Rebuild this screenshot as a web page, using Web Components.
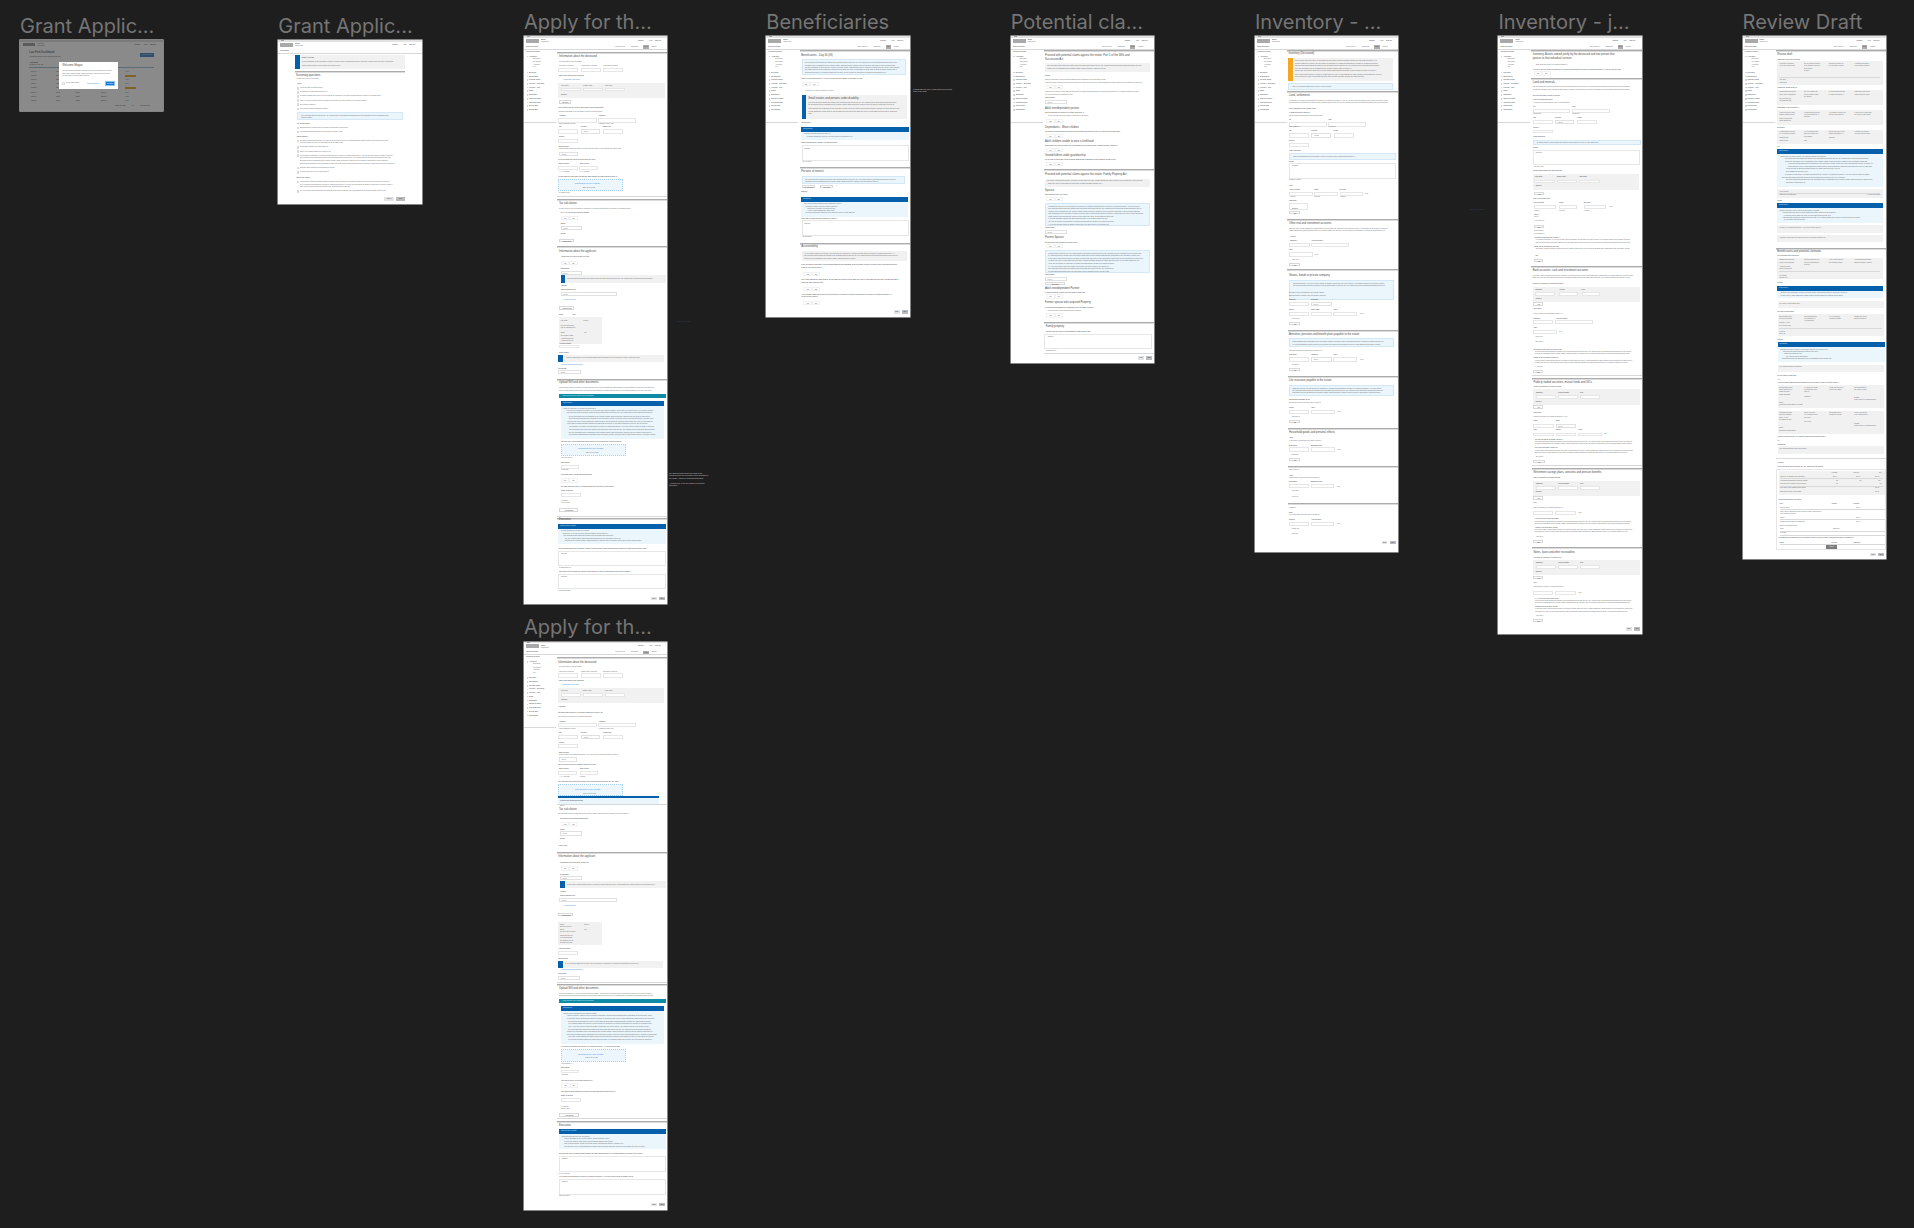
<!DOCTYPE html>
<html lang="en"><head><meta charset="utf-8"><title>Grant application flows</title>
<style>html,body{margin:0;height:100%;background:#1e1e1e;overflow:hidden}</style></head>
<body><fg-canvas></fg-canvas>
<script>
const STOCK="The applicant must confirm the details of the deceased and provide the will, any codicils and all supporting documents before the application can be submitted to the probate registry. Each beneficiary named in the will must be listed with a current mailing address and relationship to the deceased. Please review the notice requirements carefully because a person who may have a claim against the estate must be served within the required period. Enter the value of each asset as at the date of death and state whether the asset was held jointly or is located outside the province. Do not include life insurance or pension benefits that are payable to a named beneficiary. If you are not sure about an answer, speak with your lawyer before you continue with the next section of this form. ";
let ptr=0;
function fill(w,fs){const n=Math.max(3,Math.round(w/(fs*.47)));if(ptr+n>=STOCK.length)ptr=0;let s=STOCK.slice(ptr,ptr+n).trim();ptr+=n;return s;}
function ctx(fx,fy,sx=3,sy=3){
 const X=z=>(z-fx)/sx,Y=z=>(z-fy)/sy;
 const box=(c,y0,y1,x0,x1,kids,text)=>({c,x:X(x0),w:(x1-x0)/sx,y:Y(y0),h:(y1-y0)/sy,kids:kids&&kids.flat(9),text});
 const tx=(c,fs,zy,x0,x1,text)=>{const w=(x1-x0)/sx,h=fs*1.25;return{c,x:X(x0),w,y:Y(zy)-h/2,h,text:text===undefined?fill(w,fs):text};};
 const api={
  h:(zy,x0,x1,s)=>tx('h',2.7,zy,x0,x1,s),
  t:(zy,x0,x1,s)=>tx('t',1.6,zy,x0,x1,s),
  l:(zy,x0,x1,s)=>tx('l',1.6,zy,x0,x1,s),
  a:(zy,x0,x1,s)=>tx('a',1.6,zy,x0,x1,s),
  ts:(zys,x0,x1)=>zys.map(z=>tx('t',1.6,z,x0,x1)),
  ls:(zys,x0,x1)=>zys.map(z=>tx('l',1.6,z,x0,x1)),
  tc:(zy,...cols)=>cols.map(c=>tx('t',1.6,zy,c[0],c[1],c[2])),
  lc:(zy,...cols)=>cols.map(c=>tx('l',1.6,zy,c[0],c[1],c[2])),
  i:(y0,y1,...cols)=>cols.map(c=>box('inp',y0,y1,c[0],c[1])),
  s:(y0,y1,x0,x1,v='Select')=>box('sel',y0,y1,x0,x1,null,v),
  b:(y0,y1,x0,x1,v='Add another')=>box('btn',y0,y1,x0,x1,null,v),
  yn:(zy,x0)=>{const w=8.5*sx,h=2.2*sy;return[box('seg',zy-h,zy+h,x0,x0+w,null,'Yes'),box('seg',zy-h,zy+h,x0+w,x0+2*w,null,'No')];},
  ln:(zy,x0,x1,k='thick')=>box(k,zy-1.5,zy+4.5,x0,x1),
  box:(c,y0,y1,x0,x1,kids)=>box(c,y0,y1,x0,x1,kids),
  strip:(c,y0,y1,x0,x1)=>box(c,y0,y1,x0,x1),
  bar:(y0,y1,x0,x1,v,c='bar')=>box(c,y0,y1,x0,x1,null,v),
  rect:(c,y0,y1,x0,x1,v)=>box(c,y0,y1,x0,x1,null,v)
 };
 return api;
}
const CSS=`
.r{display:flex;flex:none}
.r>div{flex:none;box-sizing:border-box;white-space:nowrap;line-height:1.25}
.h{font-size:2.7px;color:#4c4c4c;font-weight:400}
.t{font-size:1.6px;color:#6a6a6a}
.l{font-size:1.6px;color:#383838}
.a{font-size:1.6px;color:#2b88d6}
.inp{background:#fff;border:1px solid #e6e6e6}
.sel{background:#fff;border:1px solid #e0e0e0;font-size:1.6px;color:#777;padding-left:1.5px;line-height:3.6px!important;overflow:hidden}
.btn{background:#fff;border:1px solid #d8d8d8;font-size:1.6px;color:#444;text-align:center;line-height:3.4px!important}
.seg{border:1px solid #f1f1f1;font-size:1.6px;color:#444;text-align:center;line-height:3.4px!important;background:#fff}
.thick{background:linear-gradient(#acacac 50%,#dcdcdc 50%)}
.thin{background:#d8d8d8}
.g{background:#f1f1f1}
.b{background:#ebf5fc}
.bb{background:#ebf5fc;border:1px solid #d4e7f7}
.dz{background:#eef6fd;border:1px dotted #a9d2f0}
.bar{background:#0560ac;color:#dbe9f5;font-size:1.6px;padding-left:2px;line-height:4.4px!important}
.teal{background:#0f8ba6;color:#dff1f5;font-size:1.6px;padding-left:3px;line-height:4.4px!important}
.strip{background:#0560ac}
.amb{background:#f5a623}
.sq{background:#d4d4d4}
.logo{background:#a9a9a9}
.top{background:#e2e2e2}
.mark{background:#a4a4a4}
.tab{background:#adadad;font-size:1.5px;color:#444;text-align:center;line-height:3px!important}
.nb{background:#e4e4e4;color:#444;font-size:1.5px;text-align:center;line-height:3.2px!important}
.nx{background:#bcbcbc;color:#333;font-size:1.5px;text-align:center;line-height:3.2px!important}
.dark{background:#7b7b7b;color:#e8e8e8;font-size:1.5px;text-align:center;line-height:3.2px!important}
.modal{background:#fff}
.pri{background:#1a7bd4;color:#fff;font-size:1.5px;text-align:center;line-height:4.4px!important;border:1px solid #8cc3ea}
.chip{background:#e8b64f}
.dbtn{background:#5a90d0;color:#dfe8f2;font-size:1.4px;text-align:center;line-height:3.6px!important}
.dl{background:#a9c8df}
.cb{background:#fff;border:1px solid #dcdcdc}
`;
function render(parent,items,ox,oy){
 items=items.flat(9).sort((p,q)=>p.y-q.y);
 let cy=oy,i=0;
 while(i<items.length){
  const g=[];const y=items[i].y;
  while(i<items.length&&Math.abs(items[i].y-y)<.02)g.push(items[i++]);
  g.sort((p,q)=>p.x-q.x);
  const h=Math.max(...g.map(o=>o.h));
  const row=document.createElement('div');row.className='r';
  row.style.cssText=`margin-top:${(y-cy).toFixed(2)}px;height:${h.toFixed(2)}px`;
  let cx=ox;
  for(const o of g){
   const d=document.createElement('div');d.className=o.c;
   d.style.cssText=`margin-left:${(o.x-cx).toFixed(2)}px;width:${o.w.toFixed(2)}px;height:${o.h.toFixed(2)}px`;
   if(o.text)d.textContent=o.text;
   if(o.kids)render(d,o.kids,o.x,o.y);
   row.appendChild(d);cx=o.x+o.w;
  }
  parent.appendChild(row);cy=y+h;
 }
}
const HEAD=(title,tabs=true)=>{const c=ctx(0,0,1,1);return[
 c.rect('top',0,1.7,0,143.5),
 c.rect('mark',.2,1.4,3,6),
 c.rect('logo',3,7,2,15),
 c.l(4.2,17,23,'Estate'),
 c.lc(4.8,[114,123,'Contact'],[125,128,'Help'],[131,138,'Sign out']),
 c.t(6.1,17,24,'Grant filing'),
 c.l(11,2,22,title),
 tabs?[c.tc(11,[91.3,104.3,'Save and exit'],[107,117,'Download'],[127.5,137,'Submit']),c.rect('tab',9.4,12.6,119.3,124.7,'Draft')]:[],
 c.rect('thin',13,14,0,143.5)
];};
const NAV=(()=>{const c=ctx(0,0,1,1);
 const it=(y,x,s,w)=>[c.rect('sq',y-.8,y+.8,x-2.5,x-.9),c.l(y,x,x+w,s)];
 return()=>[
 c.l(16,1.5,18,'Application sections'),
 it(20.7,5,'Application',12),
 c.t(23,9,16,'Deceased'),c.t(26.3,9,17,'Tax details'),c.t(29,9,18,'Applicant'),c.t(31.3,9,16,'Will'),
 it(36.7,5,'Executors',10),it(40.7,5,'Beneficiaries',13),it(44.3,5,'Potential claims',16),it(48,5,'Inventory - Deceased',24),
 it(51.7,5,'Inventory - joint',10),it(55.3,5,'Debts',10),it(59.3,5,'Distribution',13),it(63,5,'Notices to others',16),it(66.7,5,'Supporting docs',13),it(70.3,5,'Review draft',10),it(74.3,5,'Declarations',12),
 c.rect('thin',86,87,0,32)];})();

const A3=()=>{const a=ctx(42,108),b=ctx(42,-852);return[
 a.ln(157,142,472),
 a.h(170,147,282,'Information about the deceased'),
 a.t(186,147,236,'Full legal name of the deceased'),
 a.tc(198,[147,190,'First name (required)'],[214,262,'Middle name (optional)'],[280,320,'Last name (required)']),
 a.i(205,217,[145,205],[212,272],[280,340]),
 a.l(228,147,243,'Other legal names of the deceased'),
 a.a(240,155,228,'+ Add another legal name'),
 a.box('g',248,295,145,465,[a.tc(258,[153,195,'First name'],[220,270,'Middle name'],[285,325,'Last name']),a.i(263,274,[152,212],[220,280],[285,345]),a.l(285,153,180,'Remove')]),
 a.b(300,312,148,182,'Add name'),
 a.l(323,145,295),a.t(335,145,285),
 a.lc(348,[147,170,'Address 1'],[265,288,'Address 2']),
 a.i(355,368,[145,260],[265,378]),
 a.tc(372,[147,200,'Street address, PO box'],[265,320,'Apartment, suite, unit']),
 a.lc(382,[147,158,'City'],[212,235,'Province'],[278,305,'Postal code']),
 a.i(388,401,[145,205],[278,338]),a.s(388,401,212,270,'Alberta'),
 a.l(410,147,165,'Country'),a.i(418,428,[145,205]),
 a.l(440,147,188,'Date of death'),a.t(448,147,338),a.s(455,467,148,205,'Select'),
 a.l(480,145,268),
 a.lc(492,[147,192,'Date of death'],[210,258,'Date of birth']),
 a.i(498,511,[145,205],[208,265]),
 a.tc(515,[147,185,'YYYY-MM-DD'],[208,245,'YYYY-MM-DD']),
 a.l(531,145,340),
 a.box('dz',537,575,145,340,[a.a(550,192,295,'Drag and drop a file here or browse'),a.t(562,215,270,'PDF up to 10 MB')]),
 a.t(580,147,182),
 a.rect('thin',589,592,142,472),a.ln(598,142,472),
 a.h(611,147,207,'Tax calculation'),
 a.t(627,147,378),
 a.l(640,152,245),a.yn(655,152),
 a.l(672,152,178,'Status'),a.s(679,692,152,217,'Select'),
 a.l(702,152,175,'Details'),a.b(717,727,148,192,'Add tax item'),
 a.ln(740,142,472),
 a.h(756,147,282,'Information about the applicant'),
 a.l(772,152,242),a.yn(790,152),
 a.l(807,152,175,'Relationship'),a.s(813,825,152,217,'Select'),
 a.box('g',827,850,152,468,[a.strip('strip',827,850,152,164),a.t(838,172,445)]),
 a.l(860,152,172,'Address'),a.l(872,152,220,'Search address book'),
 a.s(878,890,152,320,'Select'),a.a(902,157,216,'+ Add new contact'),
 a.b(920,930,148,192,'Add applicant'),
 a.lc(945,[147,167,'Name'],[188,205,'Title']),
 a.box('g',952,1032,147,277,[a.tc(965,[152,178,'Full name'],[220,250,'Lawyer']),a.ts([978,985],152,200),a.tc(999,[152,176,'Email'],[222,238,'Fax']),a.ts([1010,1017,1024],152,192)]),
 b.l(72,147,195,'Applicant number'),b.i(75,85,[147,207]),
 b.l(100,147,187,'Notice details'),
 b.box('g',105,128,145,462,[b.strip('strip',105,128,145,159),b.t(115,168,408)]),
 b.a(135,150,235,'+ Add new supporting document'),
 b.l(147,145,185,'Documents'),b.s(152,164,145,212,'Select'),
 b.ln(179,142,472),
 b.h(190,147,290,'Upload Will and other documents'),
 b.ts([205,213],147,450),
 b.bar(222,236,147,467,'Attach a scan of the original Will and codicils','teal'),
 b.bar(244,258,153,463,'Scan and file'),
 b.box('b',258,357,153,463,[b.ts([267],160,268),b.ts([274,281],170,445),b.ts([291,298],176,445),b.ts([306,314],172,440),b.ts([322,330],178,452),b.ts([339,346],176,450)]),
 b.l(367,153,345),
 b.box('dz',372,410,153,347,[b.a(386,202,300,'Drag and drop a file here or browse'),b.t(398,225,278,'PDF up to 10 MB')]),
 b.t(416,155,190),b.l(430,153,180,'Date signed'),b.i(435,447,[152,208]),b.t(452,153,175),
 b.l(467,153,252),b.yn(483,152),
 b.l(501,153,328),b.l(514,153,190,'Name of witness'),b.i(520,532,[152,212]),b.ts([545,551],153,180),
 b.b(567,577,148,205,'Add witness'),
 b.rect('thin',589,592,142,472),b.ln(597,142,472),
 b.h(602,147,190,'Executors'),
 b.bar(614,628,145,467,'Duties of the executor'),
 b.box('b',628,675,145,467,[b.ts([635],153,240),b.ts([643],158,305),b.ts([650],160,320),b.ts([658],165,345),b.ts([665],165,415)]),
 b.l(688,147,420),b.box('inp',694,740,145,467,[b.t(702,150,172,'Optional')]),b.t(745,147,183),
 b.l(757,147,380),b.box('inp',763,810,145,467,[b.t(770,150,172,'Optional')]),b.t(815,147,183),
 b.rect('nb',833,843,423,441,'Back'),b.rect('nx',833,843,447,465,'Next')
];};

const A4=()=>{const a=ctx(12,94.5),b=ctx(12,-835.5);return[
 a.ln(142,110,442),
 a.h(157,115,252,'Information about the deceased'),
 a.t(172,117,205,'Full legal name of the deceased'),
 a.tc(185,[117,160,'First name (required)'],[183,232,'Middle name (optional)'],[248,290,'Last name (required)']),
 a.i(190,205,[115,175],[183,243],[248,308]),
 a.l(213,117,212,'Other legal names of the deceased'),
 a.a(225,122,197,'+ Add another legal name'),
 a.box('g',234,280,115,432,[a.tc(243,[122,165,'First name'],[188,238,'Middle name'],[255,295,'Last name']),a.i(249,261,[122,183],[190,250],[255,315]),a.l(271,124,147,'Remove')]),
 a.l(292,115,152,'Add name'),
 a.l(309,115,263),a.t(322,115,228),
 a.lc(335,[117,140,'Address 1'],[235,258,'Address 2']),
 a.i(340,352,[115,230],[235,348]),
 a.tc(358,[118,170,'Street address, PO box'],[235,288,'Apartment, suite, unit']),
 a.lc(370,[117,128,'City'],[182,205,'Province'],[250,277,'Postal code']),
 a.i(375,388,[115,175],[250,308]),a.s(375,388,182,240,'Alberta'),
 a.l(398,117,135,'Country'),a.i(403,415,[115,175]),
 a.l(428,117,158,'Date of death'),a.t(436,117,305),a.s(442,455,117,172,'Select'),
 a.l(466,115,237),
 a.lc(478,[117,163,'Date of death'],[180,228,'Date of birth']),
 a.i(484,497,[115,172],[180,235]),
 a.tc(501,[118,152,'YYYY-MM-DD'],[180,205,'Format']),
 a.l(518,115,308),
 a.box('dz',523,558,115,310,[a.a(537,163,262,'Drag and drop a file here or browse'),a.t(550,187,238,'PDF up to 10 MB')]),
 a.bar(558,566,115,418,''),
 a.box('b',566,587,115,418,[a.l(573,120,195)]),
 a.rect('thin',583,587,110,442),
 a.t(590,120,133),
 a.h(600,117,177,'Tax calculation'),
 a.t(613,115,348),
 a.l(628,120,213),a.yn(643,122),
 a.l(660,120,146,'Status'),a.s(665,678,120,187,'Select'),
 a.l(688,120,145,'Details'),a.l(708,115,160,'Add tax item'),
 a.ln(727,110,442),
 a.h(742,115,250,'Information about the applicant'),
 a.l(760,120,212),a.yn(776,122),
 a.l(795,120,145,'Relationship'),a.s(800,812,120,187,'Select'),
 a.box('g',815,835,120,437,[a.strip('strip',815,835,120,134),a.t(825,140,415)]),
 a.l(847,120,140,'Address'),a.l(858,120,188,'Search address book'),
 a.s(865,877,118,292,'Select'),a.a(889,127,186,'+ Add new contact'),
 a.b(909,919,115,160,'Add applicant'),
 b.box('g',8,77,115,245,[b.tc(17,[120,138,'Name'],[192,225,'Lawyer']),b.ts([22],120,157),b.tc(32,[120,137,'Email'],[192,208,'Fax']),b.ts([38],120,172),b.ts([50,56,63,70],120,160)]),
 b.l(88,115,163,'Applicant number'),b.i(93,106,[115,175]),
 b.l(118,115,158,'Notice details'),
 b.box('g',123,144,115,430,[b.strip('strip',123,144,115,129),b.t(133,135,378)]),
 b.a(152,120,203,'+ Add new supporting document'),
 b.l(163,115,153,'Documents'),b.s(168,180,115,180,'Select'),
 b.rect('thin',186,189,110,442),b.ln(194,110,442),
 b.h(207,117,260,'Upload Will and other documents'),
 b.ts([222,230],117,420),
 b.bar(238,252,117,437,'Attach a scan of the original Will and codicils','teal'),
 b.bar(260,275,123,433,'Scan and file'),
 b.box('b',275,373,123,433,[b.ts([284],130,238),b.ts([291,299],140,415),b.ts([307,315],145,415),b.ts([323,331],145,408),b.ts([339,347],140,422),b.ts([354,363],145,420)]),
 b.l(383,123,315),
 b.box('dz',388,428,123,317,[b.a(403,172,270,'Drag and drop a file here or browse'),b.t(414,193,246,'PDF up to 10 MB')]),
 b.t(433,124,158),b.l(446,123,150,'Date signed'),b.i(451,462,[123,178]),b.t(468,124,146),
 b.l(484,123,222),b.yn(498,123),
 b.l(517,123,298),b.l(531,123,160,'Name of witness'),b.i(537,549,[123,183]),b.ts([562,568],123,150),
 b.b(582,592,118,177,'Add witness'),
 b.rect('thin',597,600,112,442),b.ln(606,112,442),
 b.h(619,117,160,'Executors'),
 b.bar(630,645,117,437,'Duties of the executor'),
 b.box('b',645,690,117,437,[b.ts([654],125,212),b.ts([660],133,277),b.ts([667],133,295),b.ts([674],133,318),b.ts([682],133,388)]),
 b.l(705,117,392),b.box('inp',710,757,117,437,[b.t(717,122,140,'Optional')]),b.t(763,117,152),
 b.l(773,117,353),b.box('inp',779,826,117,437,[b.t(786,122,140,'Optional')]),b.t(830,117,152),
 b.rect('nb',850,860,394,411,'Back'),b.rect('nx',850,860,418,436,'Next')
];};

const A5=()=>{const a=ctx(49,108);return[
 a.ln(153,151,480),
 a.h(166,154,284,'Beneficiaries - Day 30 (fill)'),
 a.box('bb',178,226,155,467,[a.ts([187,194,201,208],162,458),a.t(216,162,430)]),
 a.l(238,154,348),a.yn(253,155),
 a.t(272,164,256),
 a.box('g',285,356,155,470,[a.strip('strip',285,356,155,168),a.h(296,175,335,'Small estates and persons under disability'),a.ts([308,315],175,458),a.ts([327,335],175,462),a.t(343,175,190)]),
 a.l(368,155,190,'Beneficiaries'),
 a.bar(380,396,154,476,'Beneficiaries'),
 a.box('b',396,420,154,476,[a.t(403,163,250),a.t(410,170,322)]),
 a.l(430,154,268),
 a.box('inp',436,483,155,477,[a.t(443,160,182,'Optional')]),a.t(487,158,190),
 a.ln(503,151,480),
 a.h(516,154,234,'Persons of interest'),
 a.box('bb',527,552,155,465,[a.ts([536],162,455),a.t(544,162,402)]),
 a.rect('btn',554,564,155,195,'Yes, add them'),a.rect('btn',554,564,210,250,'No, none'),a.a(559,258,265,'?'),
 a.l(577,154,192,'Eligibility'),
 a.bar(590,606,154,475,'Definitions'),
 a.box('b',606,651,154,475,[a.t(613,163,285),a.t(620,167,265),a.t(627,172,255),a.t(634,172,258),a.t(640,167,328)]),
 a.l(656,154,270),
 a.box('inp',661,708,155,477,[a.t(668,160,182,'Optional')]),a.t(712,158,190),
 a.ln(730,151,480),
 a.h(742,154,207,'Accountability'),
 a.box('g',754,785,155,470,[a.ts([763,770],162,462),a.t(777,162,330)]),
 a.l(797,154,467),a.l(805,154,215),a.yn(822,160),
 a.l(841,154,467),a.l(849,154,225),a.yn(867,160),
 a.l(885,154,457),a.l(893,154,205),a.yn(910,160),
 a.rect('nb',932,942,432,450,'Back'),a.rect('nx',932,942,456,474,'Next')
];};

const A6=()=>{const a=ctx(782,108),b=ctx(32,-792);
 const blue=(y0,y1,lines)=>a.box('bb',y0,y1,885,1199,lines.map((z,i)=>a.t(z,892,i<4?1190:(i%2?1085:1105))));
 return[
 a.ln(153,882,1212),
 a.h(166,885,1190,'Proceed with potential claims against the estate: Part 5 of the Wills and'),
 a.h(178,885,950,'Succession Act'),
 a.box('g',190,215,885,1200,[a.t(199,892,1192),a.t(207,892,1085)]),
 a.l(228,885,910,'Spouse'),a.t(241,885,1080),a.t(249,885,1192),a.yn(262,888),
 a.t(276,885,1195),a.t(284,885,975),a.l(295,885,928,'Marital status'),a.s(300,312,885,952,'Select'),
 a.h(325,885,975,'Adult interdependent partner'),a.l(339,885,1015),a.t(349,893,1020),a.yn(364,888),
 a.h(383,885,990,'Dependants - Minor children'),a.l(396,885,1130),a.yn(408,888),
 a.h(425,885,1105,'Adult children unable to earn a livelihood'),a.l(438,885,1115),a.yn(450,888),
 a.h(468,885,1100,'Grandchildren under guardianship'),a.l(481,885,1113),a.yn(492,888),
 a.ln(510,882,1212),
 a.h(524,885,1180,'Proceed with potential claims against the estate: Family Property Act'),
 a.box('g',537,561,885,1200,[a.t(545,892,1192),a.t(553,892,1070)]),
 a.h(574,885,910,'Spouse'),a.l(587,885,962),a.yn(598,888),
 blue(610,678,[618,625,633,641,649,656,664,672]),
 a.l(684,885,930,'Marital status'),a.s(690,702,885,952,'Select'),
 a.h(715,885,938,'Partner Spouse'),a.l(729,885,990),a.yn(739,888),
 blue(751,820,[759,766,774,782,790,798,806,813]),
 a.l(825,885,930,'Marital status'),a.s(832,844,885,952,'Select'),a.b(846,856,885,945,'Add partner'),
 a.h(867,885,975,'Adult interdependent Partner'),a.l(881,885,1018),a.yn(891,888),
 a.h(910,885,1010,'Former spouse who acquired Property'),a.l(924,885,1040),a.t(933,893,1000),a.yn(948,888),
 b.ln(69,132,462),
 b.h(81,137,190,'Family property'),
 b.l(97,137,275),
 b.box('inp',103,148,133,456,[b.t(110,140,160,'Optional')]),b.t(153,137,172),
 b.rect('thin',160,164,132,462),
 b.rect('nb',170,180,415,432,'Back'),b.rect('nx',170,180,438,456,'Next')
];};

const A7=()=>{const a=ctx(34,108,2.33,3),b=ctx(15,-732);
 return[
 a.ln(153,108,368),
 a.h(161,112,180,'Inventory (Deceased)'),
 a.box('g',174,242,110,356,[a.strip('amb',174,242,110,122),a.ts([184,191,198],127,338),a.t(206,127,270),a.t(214,127,330),a.ts([224],127,338),a.t(231,127,300)]),
 a.box('bb',250,270,110,356,[a.t(259,118,225)]),
 a.ln(276,108,368),
 a.h(288,113,178,'Land, settlements'),
 a.ts([303,310],113,360),
 a.l(326,113,182),a.l(340,113,165),a.t(347,113,200),
 a.lc(360,[113,130,'Lot'],[205,224,'Plan']),
 a.i(366,380,[113,202],[205,293]),
 a.tc(382,[113,158,'Street address'],[205,248,'Apartment']),
 a.lc(394,[113,122,'City'],[165,182,'Province'],[217,240,'Postal']),
 a.i(400,413,[113,160],[217,264]),a.s(400,413,165,212,'Alberta'),
 a.l(423,113,128,'Country'),a.i(430,440,[113,160]),
 a.l(454,113,150,'Legal description'),
 a.box('bb',460,480,113,362,[a.t(469,120,275)]),
 a.l(485,113,155,'Details'),
 a.box('inp',490,537,113,362,[a.t(497,118,135,'Optional')]),a.t(541,113,140),
 a.l(558,113,128,'Value'),
 a.lc(570,[115,165,'Value at death'],[172,192,'Share'],[231,265,'Net value']),
 a.i(576,590,[113,168],[172,227],[231,286]),a.t(582,290,304,'CAD'),
 a.tc(592,[115,155,'Amount'],[172,212,'Percent'],[232,265,'Amount']),
 a.l(604,113,135,'Ownership'),
 a.box('inp',610,632,113,158,[a.l(625,118,135,'Remove')]),
 a.b(634,644,113,140,'Add'),
 a.ln(660,108,368),
 a.h(673,113,218,'Other real and investment accounts'),
 a.ts([688,695],113,358),
 a.l(711,115,135,'Account'),
 a.lc(725,[115,150,'Institution'],[165,205,'Account number']),
 a.i(731,743,[113,162],[165,254]),
 a.l(752,113,130,'Value'),a.i(758,772,[113,170]),a.t(765,173,187,'CAD'),
 a.t(780,120,140),a.b(790,800,113,140,'Add'),
 a.ln(808,108,368),
 a.h(827,113,240,'Shares, bonds or private company'),
 a.box('bb',840,900,113,358,[a.ts([850,857],120,350)]),
 a.ts([880,888],113,205),
 b.lc(61,[117,140,'Company'],[183,218,'Certificate']),
 b.i(68,80,[117,178]),b.s(68,80,183,245,'Select'),
 b.lc(90,[117,145,'Shares'],[183,225,'Share class'],[250,272,'Value']),
 b.i(96,108,[117,178],[183,245],[250,320]),b.t(102,330,342,'CAD'),
 b.t(117,125,150),b.b(126,136,117,150,'Add'),
 b.ln(152,113,443),
 b.h(164,117,368,'Annuities, pensions and benefit plans payable to the estate'),
 b.box('bb',176,202,117,432,[b.ts([185,192],124,408)]),
 b.t(214,117,230),
 b.lc(227,[117,150,'Plan name'],[183,220,'Institution'],[250,272,'Value']),
 b.i(233,246,[117,178],[250,320]),b.s(233,246,183,245,'Select'),b.t(240,330,345,'CAD'),
 b.t(255,125,150),b.b(264,274,117,150,'Add'),
 b.ln(290,113,443),
 b.h(302,117,270,'Life insurance payable to the estate'),
 b.box('bb',315,348,117,432,[b.ts([324,331,338],124,415)]),
 b.l(360,117,188),b.t(369,117,215),
 b.lc(384,[117,158,'Insurer'],[183,205,'Value']),
 b.i(391,403,[117,178],[183,255]),b.t(396,262,275,'CAD'),
 b.t(411,125,150),b.b(420,430,117,150,'Add'),
 b.ln(446,113,443),
 b.h(459,117,282,'Household goods and personal effects'),
 b.l(475,117,130,'Asset'),b.t(483,117,215),
 b.lc(498,[117,158,'Description'],[183,228,'Estimated value']),
 b.i(503,516,[117,178],[183,255]),b.t(510,262,275,'CAD'),
 b.t(525,125,150),b.b(535,545,117,150,'Add'),
 b.ln(562,113,443),
 b.t(572,117,168,'Other property'),
 b.l(588,117,130,'Asset'),b.t(596,117,215),
 b.lc(609,[117,158,'Description'],[183,228,'Estimated value']),
 b.i(615,627,[117,178],[183,252]),b.t(622,260,277,'CAD'),
 b.t(636,125,148),b.t(652,125,148),
 b.ln(673,113,443),
 b.t(685,117,150,'Liabilities'),
 b.l(700,117,130,'Debt'),b.t(708,117,215),
 b.lc(722,[117,158,'Creditor'],[183,228,'Amount owing']),
 b.i(728,740,[117,178],[183,252]),b.t(734,260,277,'CAD'),
 b.t(749,125,148),b.t(764,125,148),
 b.rect('nb',784,794,396,412,'Back'),b.rect('nx',784,794,420,437,'Next')
];};

const A8=()=>{const a=ctx(601,108,2.33,3),b=ctx(55,-792);
 return[
 a.ln(153,677,936),
 a.h(163,681,925,'Inventory: Assets owned jointly by the deceased and one person that'),
 a.h(176,681,808,'passes to that individual survivor'),
 a.t(194,688,770),a.l(211,681,903),a.yn(221,683),
 a.ln(237,677,936),
 a.h(248,681,745,'Land and minerals'),
 a.ts([262,270],681,925),
 a.l(287,681,748),a.l(301,682,733),a.t(308,682,768),
 a.lc(321,[682,700,'Lot'],[773,792,'Plan']),
 a.i(327,338,[682,769],[773,860]),
 a.tc(343,[682,725,'Description'],[773,818,'Certificate']),
 a.lc(355,[682,690,'City'],[733,750,'Province'],[785,808,'Postal']),
 a.i(361,373,[682,729],[785,832]),a.s(361,373,733,778,'Alberta'),
 a.l(383,682,695,'Country'),a.i(390,401,[682,728]),
 a.l(413,682,720,'Legal description'),
 a.box('bb',421,437,682,934,[a.t(428,688,842)]),
 a.l(444,682,720,'Details'),
 a.box('inp',450,497,682,930,[a.t(457,686,700,'Optional')]),a.t(501,684,710),
 a.l(515,682,752),
 a.box('g',523,570,682,928,[a.lc(533,[686,722,'First name'],[737,772,'Middle name'],[790,825,'Last name']),a.i(540,550,[685,733],[737,785],[790,838]),a.l(560,688,708,'Remove')]),
 a.b(576,586,683,708,'Add'),
 a.l(598,682,730),
 a.lc(611,[683,735,'Value at death'],[743,762,'Share'],[800,835,'Net value']),
 a.i(617,628,[683,735],[743,785],[800,852]),a.t(622,860,875,'CAD'),
 a.tc(634,[683,722,'Amount'],[743,795,'Percent'],[800,845,'Amount']),
 a.l(645,684,708,'Owner'),a.t(652,684,695),a.t(665,686,708),a.b(675,685,683,707,'Add'),
 a.ts([695,702],684,710),
 a.l(716,684,748),a.ts([722,730],688,925),
 a.l(742,684,745),a.t(748,688,925),
 a.l(769,686,706,'Add'),a.b(777,787,683,706,'Add'),
 a.ln(802,677,936),
 a.h(814,681,830,'Bank accounts, cash and investment accounts'),
 a.ts([829,836],681,930),
 a.l(852,681,760),
 a.box('g',862,908,682,930,[a.lc(871,[687,722,'Institution'],[742,778,'Account'],[795,828,'Type']),a.i(877,889,[687,733],[742,787],[795,838]),a.l(897,688,710,'Remove')]),
 b.b(8,18,160,190,'Add'),b.l(28,160,185,'Joint owner'),b.t(42,160,258),
 b.lc(57,[160,190,'Institution'],[227,290,'Account number']),
 b.i(62,74,[160,218],[226,338]),
 b.l(85,160,180,'Value'),b.i(90,102,[160,230]),b.a(97,236,250,'CAD'),
 b.t(112,166,190),b.t(126,166,190),
 b.l(150,160,248),b.ts([157,164],165,475),b.l(176,160,238),b.ts([183,190],165,470),
 b.t(201,166,190),b.b(210,220,158,190,'Add'),
 b.rect('thin',226,229,155,485),b.ln(237,155,485),
 b.h(249,160,380,'Publicly traded securities, mutual funds and GICs'),
 b.l(264,160,250),
 b.box('g',270,316,160,480,[b.lc(280,[167,210,'Institution'],[233,285,'Account number'],[300,342,'Type']),b.i(287,298,[167,227],[233,295],[300,360]),b.l(307,167,190,'Remove')]),
 b.b(318,328,160,190,'Add'),
 b.l(340,160,190,'Joint owner'),b.t(352,160,272),
 b.lc(366,[160,185,'Name'],[227,260,'Share']),
 b.i(373,385,[160,222]),b.s(373,385,227,288,'Select'),
 b.lc(393,[160,195,'Cost'],[227,265,'Market'],[295,315,'Value']),
 b.i(400,411,[160,222],[227,288],[295,365]),b.a(405,370,388,'CAD'),
 b.l(421,165,248),b.ts([428,435],165,478),b.l(447,165,238),b.ts([454,461],165,472),
 b.t(473,168,190),b.b(482,492,158,195,'Add'),
 b.rect('thin',496,499,155,485),b.ln(507,155,485),
 b.h(521,160,382,'Retirement savings plans, annuities and pension benefits'),
 b.l(537,160,250),
 b.box('g',544,590,160,480,[b.lc(553,[167,210,'Institution'],[233,285,'Account number'],[300,342,'Type']),b.i(560,572,[167,227],[233,295],[300,360]),b.l(579,167,190,'Remove')]),
 b.b(591,601,160,190,'Add'),
 b.l(611,160,172,'Type'),b.t(625,160,257),
 b.i(635,648,[160,220],[225,287]),b.t(641,295,312,'CAD'),
 b.l(660,165,245),b.ts([667,674],165,475),b.l(685,165,238),b.ts([692,699],165,470),
 b.t(712,168,190),b.b(721,731,158,190,'Add'),
 b.ln(746,155,485),
 b.h(760,160,288,'Notes, loans and other receivables'),
 b.l(776,160,250),
 b.box('g',783,828,160,480,[b.lc(790,[167,210,'Institution'],[233,285,'Account number'],[300,342,'Type']),b.i(797,808,[167,227],[233,295],[300,360]),b.l(818,167,190,'Remove')]),
 b.b(829,839,160,190,'Add'),
 b.l(850,160,172,'Type'),b.t(863,160,257),
 b.i(874,886,[160,220],[225,287]),b.t(880,295,312,'CAD'),
 b.l(898,165,245),b.ts([905,912],165,475),b.l(923,165,238),b.ts([930,937],165,470),
 b.t(950,168,190),b.b(960,970,158,190,'Add'),
 b.rect('nb',985,995,438,455,'Back'),b.rect('nx',985,995,462,480,'Next')
];};

const A9=()=>{const a=ctx(1169,108,2.33,3),b=ctx(787,-792);
 const C=[1255,1312,1370,1430];
 const cols=(c,zy,w=38)=>c.tc(zy,...C.map(x=>[x,x+w,fill(w/2.33,1.6)]));
 const CB=[897,972,1047,1122];
 const colsB=(zy,w=40)=>b.tc(zy,...CB.map(x=>[x,x+w,fill(w/3,1.6)]));
 return[
 a.ln(153,1247,1503),
 a.h(165,1250,1297,'Review draft'),
 a.l(180,1250,1305,'Information about the deceased'),
 a.box('g',184,255,1249,1495,[cols(a,192),cols(a,199),a.t(206,1312,1335),a.t(213,1312,1328),a.rect('thin',231,234,1254,1490),a.t(241,1255,1270),a.t(248,1255,1270)]),
 a.l(265,1250,1302),
 a.box('g',270,316,1249,1495,[cols(a,277),cols(a,284),a.t(291,1312,1332),a.ts([297,304],1255,1285)]),
 a.l(325,1250,1305),
 a.box('g',331,376,1249,1495,[cols(a,338),cols(a,345),a.t(352,1312,1332),a.ts([356,363],1255,1285)]),
 a.l(384,1250,1277,'Executors'),
 a.box('g',389,433,1249,1495,[cols(a,396),cols(a,403),a.t(410,1312,1332),a.tc(415,[1255,1285,'Notices sent'],[1370,1392,'Witness']),a.tc(422,[1255,1285,'Date served'],[1312,1330,'Mail'])]),
 a.l(442,1250,1272,'Will'),
 a.bar(447,461,1249,1497,'Scan and file'),
 a.box('b',461,560,1249,1497,[a.t(470,1255,1370),a.t(478,1268,1477),a.t(485,1268,1477),a.t(493,1275,1485),a.t(501,1275,1480),a.t(509,1270,1410),a.t(518,1270,1325),a.t(526,1268,1480),a.t(534,1260,1420),a.t(542,1270,1485),a.t(550,1270,1320)]),
 a.box('g',568,595,1249,1497,[a.t(575,1255,1280),a.rect('thin',579,581,1254,1490),a.t(585,1255,1295),a.t(585,1460,1492)]),
 a.l(604,1250,1272,'Codicil'),
 a.bar(610,625,1249,1497,'Scan and file'),
 a.box('b',625,668,1249,1497,[a.t(632,1255,1355),a.t(640,1262,1390),a.t(647,1265,1385),a.t(655,1262,1460),a.t(662,1265,1320)]),
 a.box('g',676,698,1249,1497,[a.t(684,1255,1360)]),
 a.box('g',706,728,1249,1497,[a.t(716,1255,1368)]),
 a.ln(745,1247,1503),
 a.h(755,1250,1360,'Beneficiaries and potential claimants'),
 a.l(770,1250,1302),
 a.box('g',775,838,1249,1495,[cols(a,782),cols(a,789),a.t(796,1312,1332),a.ts([802,809],1255,1285),a.rect('thin',815,817,1254,1490),a.t(828,1255,1275),a.t(834,1255,1275)]),
 a.l(851,1250,1272,'Notices'),
 a.bar(858,873,1249,1497,'Scan and file'),
 a.box('b',873,895,1249,1497,[a.t(880,1258,1420),a.t(888,1258,1410)]),
 b.box('g',5,25,892,1212,[b.t(13,898,968),b.t(20,898,905,'-')]),
 b.l(38,892,945),
 b.box('g',42,110,892,1212,[colsB(51),colsB(58),b.t(65,972,1000),b.ts([71,78],897,935),b.rect('thin',84,86,897,1205),b.t(98,897,915),b.t(104,897,915)]),
 b.l(122,892,920,'Notices'),
 b.bar(127,141,892,1213,'Definitions'),
 b.box('b',141,188,892,1213,[b.t(150,900,1053),b.t(157,908,1020),b.t(164,912,968),b.t(171,915,990),b.t(178,905,1062)]),
 b.box('g',195,217,892,1210,[b.t(203,898,968),b.t(210,898,905,'-')]),
 b.l(228,892,957),b.t(240,892,905,'Yes'),
 b.l(250,892,1090),
 b.box('g',255,325,892,1210,[colsB(264),colsB(270),b.t(278,897,933),b.t(278,972,992),b.t(285,897,933),b.t(291,972,992),b.tc(296,[1122,1145,'Details']),b.tc(302,[1122,1202,'Notice given by registered mail']),b.tc(309,[897,925,'Other']),b.tc(316,[897,968,'Personal representative of estate'])]),
 b.box('g',333,402,892,1210,[colsB(341),colsB(347),b.t(355,897,933),b.t(355,972,992),b.t(362,897,933),b.t(368,972,992),b.tc(374,[1122,1145,'Details']),b.tc(380,[1122,1202,'Notice given by registered mail']),b.tc(386,[897,925,'Other']),b.tc(393,[897,960,'Personal representative'])]),
 b.l(411,892,1050),b.t(423,892,902,'No'),b.l(435,892,925,'Comments'),
 b.box('g',440,462,892,1210,[b.t(447,898,985),b.t(454,898,905,'-')]),
 b.rect('thin',474,479,887,1217),
 b.l(489,892,923,'Inventory'),
 b.l(503,892,1040),
 b.box('inp',507,750,887,1217,[
  b.box('g',510,583,892,1212,[b.tc(518,[1050,1078,'At death'],[1117,1148,'Current'],[1193,1205,'Net']),
   b.tc(529,[897,968,'Property in Canada and elsewhere'],[1055,1078,'$0.00'],[1125,1148,'$0.00'],[1182,1205,'$0.00']),
   b.rect('thin',533,535,897,1205),
   b.tc(541,[897,988,'Household goods and personal effects'],[1065,1078,'$0'],[1135,1148,'$0'],[1192,1205,'$0']),
   b.tc(551,[897,992,'Real property located in the province'],[1065,1078,'$0'],[1140,1148,'-'],[1195,1205,'0%']),
   b.rect('thin',556,558,897,1205),
   b.tc(563,[897,985,'Net value of the estate before debts'],[1182,1205,'$0.00']),
   b.tc(575,[897,965,'Total gross value of the estate'],[1182,1205,'$0.00'])]),
  b.l(597,892,962),
  b.lc(610,[895,908,'Type'],[1050,1078,'Amount'],[1117,1148,'Payable']),
  b.tc(622,[895,930,'Funeral costs'],[1125,1148,'$0.00']),
  b.rect('thin',626,628,895,1210),
  b.t(633,897,1030),b.t(640,897,950),
  b.tc(652,[897,920,'Taxes'],[1125,1148,'$0.00']),
  b.rect('thin',656,658,895,1210),
  b.tc(663,[897,980,'Debts owed to financial institutions'],[1125,1148,'$0.00']),
  b.t(675,895,955),
  b.tc(686,[897,910,'Date'],[1055,1080,'Signed by']),
  b.rect('thin',691,693,895,1210),
  b.t(698,897,915),
  b.rect('thin',703,705,895,1210),
  b.l(713,892,1128),
  b.lc(727,[895,908,'Name'],[1050,1080,'Witness'],[1117,1148,'Signature']),
  b.rect('thin',731,733,895,1210),
  b.rect('dark',735,745,1035,1067,'Submit')
 ]),
 b.rect('nb',760,770,1170,1187,'Back'),b.rect('nx',760,770,1194,1212,'Next')
];};

const A2=()=>{const a=ctx(835,120);const cb=(zy,x1,s)=>[a.rect('cb',zy-4,zy+4,890,898),a.t(zy,900,x1,s)];return[
 a.box('g',165,207,885,1215,[a.strip('strip',165,207,885,899),a.l(175,906,970,'Before you begin'),a.t(187,906,1190),a.t(197,906,1030)]),
 a.ln(214,885,1215),
 a.h(226,888,945,'Screening questions'),
 a.t(238,890,960),
 a.l(253,890,908,'Assets'),
 cb(265,975),cb(277,990),cb(289,1165),cb(302,1118),cb(314,955),cb(327,990),
 a.box('bb',337,359,890,1210,[a.t(344,900,1185),a.t(352,900,938)]),
 a.l(372,890,936,'Will and deceased'),cb(384,1058),cb(396,1035),
 a.l(411,890,936,'Marital situation'),
 cb(424,1178),a.t(431,900,1040),cb(443,990),cb(456,1003),
 cb(468,1200),a.ts([476,484,492],900,1190),cb(505,1013),cb(518,993),
 a.l(535,890,946,'Beneficiary notices'),
 cb(547,1195),a.t(555,900,1198),a.t(563,900,1060),cb(575,1180),
 a.rect('nb',593,603,1153,1181,'Cancel'),a.rect('nx',593,603,1188,1214,'Agree')
];};
const A1=()=>{const a=ctx(60,120);
 const rows=[215,228,241,253,265,278,290,302];
 return[
 a.rect('top',120,125,60,490),
 a.lc(122,[68,120,'Grant portal'],[255,295,'Notifications'],[400,430,'Help centre']),
 a.rect('logo',129,139,68,105),a.t(132,112,132),a.t(137,112,132),
 a.lc(134,[402,425,'Account'],[432,442,'Help'],[450,480,'Sign out']),
 a.h(158,88,160,'Law Firm Dashboard'),
 a.rect('dbtn',160,171,420,461,'New application'),
 a.t(171,88,190),
 a.l(189,88,118,'Applications'),a.t(196,88,135),
 a.rect('dl',201,204,88,462),
 rows.map((z,i)=>[a.tc(z,[93,120,'Client '+(i+1)],[168,180,'Open'],[228,240,'Draft'],[303,330,'Smith, J']),(i==1||i==4)?a.rect('chip',z-3,z+3,375,408):a.a(z,375,392,'View')]),
 a.tc(318,[345,385,'Rows per page'],[395,412,'1-8'],[420,460,'Previous Next'])
];};
const MODAL=()=>{const a=ctx(60,120);return[a.box('modal',185,268,177,353,[
 a.h(198,187,237,'Welcome Megan'),
 a.ts([213,221],187,345),a.t(229,187,275),
 a.rect('cb',246,254,187,195),a.t(250,198,233,'Do not show again'),
 a.a(251,262,305,'Edit permissions'),
 a.rect('pri',244,258,315,345,'Continue')
])];};

class WfBlocks extends HTMLElement{
 connectedCallback(){if(this.shadowRoot)return;
  const s=this.attachShadow({mode:'open'});
  const st=document.createElement('style');
  st.textContent=':host{display:block;font-family:"Liberation Sans",Arial,sans-serif}'+CSS+`.root{width:${this.getAttribute('w')||143}px}`;
  s.appendChild(st);
  const host=document.createElement('div');host.className='root';s.appendChild(host);
  const ox=+this.getAttribute('ox')||0,oy=+this.getAttribute('oy')||0;
  render(host,SCREENS[this.getAttribute('name')](),ox,oy);
 }
}
customElements.define('wf-blocks',WfBlocks);

class WfScreen extends HTMLElement{
 connectedCallback(){if(this.shadowRoot)return;
  const s=this.attachShadow({mode:'open'});
  const c=this.getAttribute('content'),t=this.getAttribute('title-text')||'Grant application',nav=!this.hasAttribute('plain');
  s.innerHTML=`<style>:host{display:block;height:100%;background:#fff;overflow:hidden}
   .body{display:flex}.nav{flex:none;width:33px}.main{flex:1;min-width:0}</style>
   <wf-blocks name="head:${t}" w="143.5"></wf-blocks>
   <div class="body">${nav?'<wf-blocks class="nav" name="nav" w="33" oy="14"></wf-blocks>':''}
   <wf-blocks class="main" name="${c}" w="${nav?110.5:143.5}" ox="${nav?33:0}" oy="14"></wf-blocks></div>`;
 }
}
customElements.define('wf-screen',WfScreen);

const SCREENS=new Proxy({nav:NAV,a1:A1,a2:A2,a3:A3,a4:A4,a5:A5,a6:A6,a7:A7,a8:A8,a9:A9,modal:MODAL},{get(o,k){
 if(String(k).startsWith('head:')){const v=k.slice(5);return()=>v==='Grant status'?HEAD(v,false):HEAD(v);}
 return o[k];}});

class FgFrame extends HTMLElement{
 connectedCallback(){if(this.shadowRoot)return;
  const s=this.attachShadow({mode:'open'});
  const n=k=>this.getAttribute(k);
  s.innerHTML=`<style>:host{position:absolute;left:${n('x')}px;top:${n('y')}px;width:${n('w')}px;height:${n('h')}px}
   .label{position:absolute;left:0;bottom:100%;margin-bottom:1.5px;font:400 20px/26px Inter,"Liberation Sans",sans-serif;color:#757575;white-space:nowrap}
   .f{width:100%;height:100%;background:#fff;box-shadow:0 0 0 .6px #c8c8c8;overflow:hidden;position:relative}</style>
   <div class="label">${n('label')}</div><div class="f"><slot></slot></div>`;
 }
}
customElements.define('fg-frame',FgFrame);

class WfDash extends HTMLElement{
 connectedCallback(){if(this.shadowRoot)return;
  const s=this.attachShadow({mode:'open'});
  s.innerHTML=`<style>:host{display:block;height:100%;position:relative;overflow:hidden;background:#fff}
   .scrim{position:absolute;inset:0;background:rgba(0,0,0,.46)}
   .m{position:absolute;inset:0}</style>
   <wf-blocks name="a1" w="143.5"></wf-blocks><div class="scrim"></div><wf-blocks class="m" name="modal" w="143.5"></wf-blocks>`;
 }
}
customElements.define('wf-dash',WfDash);

class FgNote extends HTMLElement{
 connectedCallback(){if(this.shadowRoot)return;
  const s=this.attachShadow({mode:'open'});
  s.innerHTML=`<style>:host{position:absolute;left:${this.getAttribute('x')}px;top:${this.getAttribute('y')}px;width:${this.getAttribute('w')}px;font:1.7px/2.4px "Liberation Sans",sans-serif;color:${this.getAttribute('c')||'#c9c9c9'}}</style><slot></slot>`;
 }
}
customElements.define('fg-note',FgNote);

class FgCanvas extends HTMLElement{
 connectedCallback(){if(this.shadowRoot)return;
  const s=this.attachShadow({mode:'open'});
  s.innerHTML=`<style>:host{display:block;position:relative;width:1914px;height:1228px;background:#1e1e1e;overflow:hidden}</style>
  <fg-frame x="20" y="40" w="143.3" h="70.7" label="Grant Applic..."><wf-dash></wf-dash></fg-frame>
  <fg-frame x="278.3" y="40" w="143.4" h="164" label="Grant Applic..."><wf-screen plain title-text="Grant status" content="a2"></wf-screen></fg-frame>
  <fg-frame x="524" y="36" w="143" h="568" label="Apply for th..."><wf-screen content="a3"></wf-screen></fg-frame>
  <fg-frame x="524" y="641.5" w="143" h="568" label="Apply for th..."><wf-screen content="a4"></wf-screen></fg-frame>
  <fg-frame x="766.3" y="36" w="143.4" h="281" label="Beneficiaries"><wf-screen content="a5"></wf-screen></fg-frame>
  <fg-frame x="1010.7" y="36" w="143.2" h="327" label="Potential cla..."><wf-screen content="a6"></wf-screen></fg-frame>
  <fg-frame x="1255" y="36" w="143" h="516" label="Inventory - ..."><wf-screen content="a7"></wf-screen></fg-frame>
  <fg-frame x="1498.4" y="36" w="143.2" h="598" label="Inventory - j..."><wf-screen content="a8"></wf-screen></fg-frame>
  <fg-frame x="1742.6" y="36" w="143.2" h="523.3" label="Review Draft"><wf-screen content="a9"></wf-screen></fg-frame>
  <fg-note x="669" y="472" w="40">The applicant must confirm the details of the deceased before the application can be submitted to the registry. Attach any supporting documents.<br><br>A certified copy of the Will must be filed with the application.</fg-note>
  <fg-note x="913" y="88" w="40">Persons who may have a claim must be served with notice of the grant.</fg-note>
  <fg-note x="677" y="319.5" w="22" c="#2c4a66">Move to next step</fg-note>
  <fg-note x="1470" y="208" w="22" c="#2c4a66">Joint assets notes</fg-note>`;
 }
}
customElements.define('fg-canvas',FgCanvas);
</script></body></html>
